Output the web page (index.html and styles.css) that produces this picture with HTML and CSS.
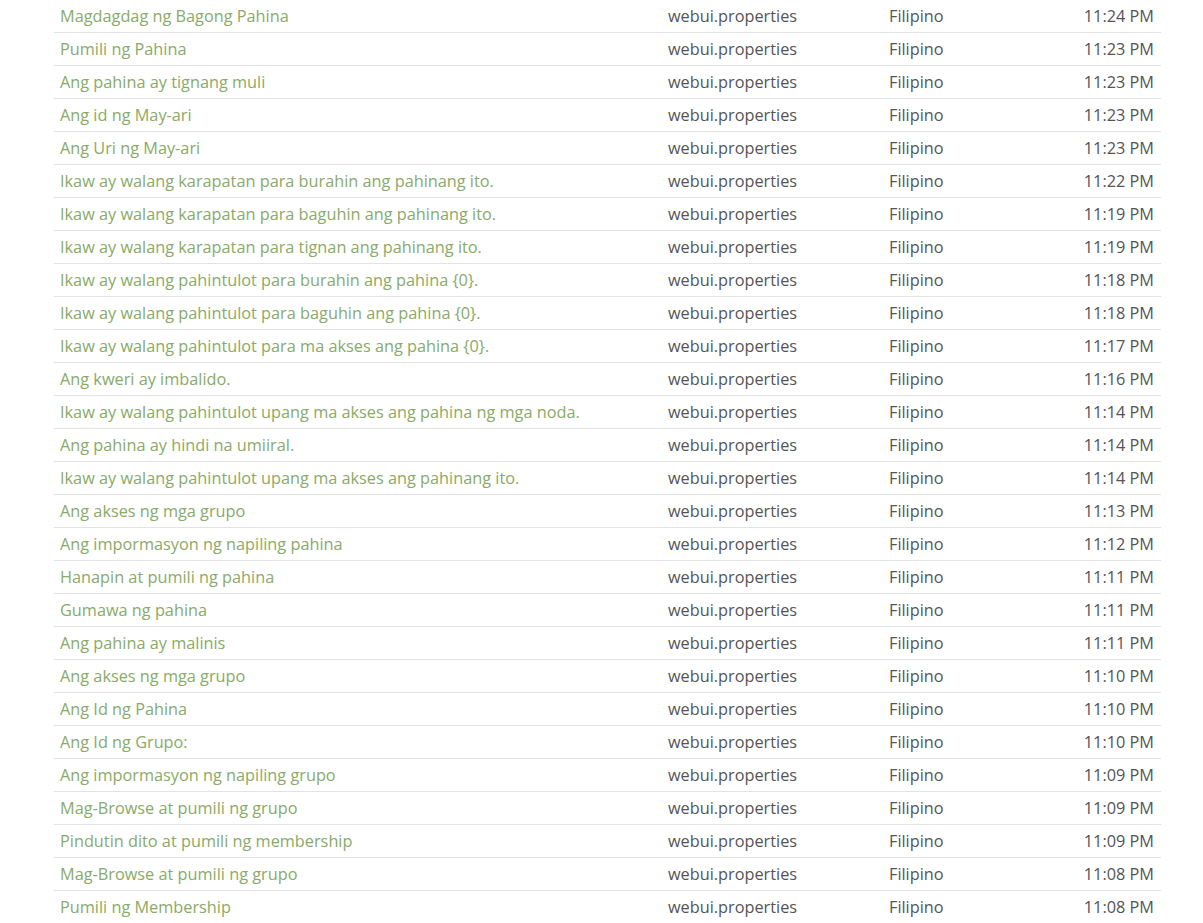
FILE: index.html
```html
<!DOCTYPE html>
<html>
<head>
<meta charset="utf-8">
<link rel="stylesheet" href="styles.css">
</head>
<body>
<div class="wrap">
<table class="list">
<colgroup><col class="c1"><col class="c2"><col class="c3"><col class="c4"></colgroup>
<tbody>
<tr><td><a href="#">Magdagdag ng Bagong Pahina</a></td><td>webui.properties</td><td>Filipino</td><td class="t">11:24 PM</td></tr>
<tr><td><a href="#">Pumili ng Pahina</a></td><td>webui.properties</td><td>Filipino</td><td class="t">11:23 PM</td></tr>
<tr><td><a href="#">Ang pahina ay tignang muli</a></td><td>webui.properties</td><td>Filipino</td><td class="t">11:23 PM</td></tr>
<tr><td><a href="#">Ang id ng May-ari</a></td><td>webui.properties</td><td>Filipino</td><td class="t">11:23 PM</td></tr>
<tr><td><a href="#">Ang Uri ng May-ari</a></td><td>webui.properties</td><td>Filipino</td><td class="t">11:23 PM</td></tr>
<tr><td><a href="#">Ikaw ay walang karapatan para burahin ang pahinang ito.</a></td><td>webui.properties</td><td>Filipino</td><td class="t">11:22 PM</td></tr>
<tr><td><a href="#">Ikaw ay walang karapatan para baguhin ang pahinang ito.</a></td><td>webui.properties</td><td>Filipino</td><td class="t">11:19 PM</td></tr>
<tr><td><a href="#">Ikaw ay walang karapatan para tignan ang pahinang ito.</a></td><td>webui.properties</td><td>Filipino</td><td class="t">11:19 PM</td></tr>
<tr><td><a href="#">Ikaw ay walang pahintulot para burahin ang pahina {0}.</a></td><td>webui.properties</td><td>Filipino</td><td class="t">11:18 PM</td></tr>
<tr><td><a href="#">Ikaw ay walang pahintulot para baguhin ang pahina {0}.</a></td><td>webui.properties</td><td>Filipino</td><td class="t">11:18 PM</td></tr>
<tr><td><a href="#">Ikaw ay walang pahintulot para ma akses ang pahina {0}.</a></td><td>webui.properties</td><td>Filipino</td><td class="t">11:17 PM</td></tr>
<tr><td><a href="#">Ang kweri ay imbalido.</a></td><td>webui.properties</td><td>Filipino</td><td class="t">11:16 PM</td></tr>
<tr><td><a href="#">Ikaw ay walang pahintulot upang ma akses ang pahina ng mga noda.</a></td><td>webui.properties</td><td>Filipino</td><td class="t">11:14 PM</td></tr>
<tr><td><a href="#">Ang pahina ay hindi na umiiral.</a></td><td>webui.properties</td><td>Filipino</td><td class="t">11:14 PM</td></tr>
<tr><td><a href="#">Ikaw ay walang pahintulot upang ma akses ang pahinang ito.</a></td><td>webui.properties</td><td>Filipino</td><td class="t">11:14 PM</td></tr>
<tr><td><a href="#">Ang akses ng mga grupo</a></td><td>webui.properties</td><td>Filipino</td><td class="t">11:13 PM</td></tr>
<tr><td><a href="#">Ang impormasyon ng napiling pahina</a></td><td>webui.properties</td><td>Filipino</td><td class="t">11:12 PM</td></tr>
<tr><td><a href="#">Hanapin at pumili ng pahina</a></td><td>webui.properties</td><td>Filipino</td><td class="t">11:11 PM</td></tr>
<tr><td><a href="#">Gumawa ng pahina</a></td><td>webui.properties</td><td>Filipino</td><td class="t">11:11 PM</td></tr>
<tr><td><a href="#">Ang pahina ay malinis</a></td><td>webui.properties</td><td>Filipino</td><td class="t">11:11 PM</td></tr>
<tr><td><a href="#">Ang akses ng mga grupo</a></td><td>webui.properties</td><td>Filipino</td><td class="t">11:10 PM</td></tr>
<tr><td><a href="#">Ang Id ng Pahina</a></td><td>webui.properties</td><td>Filipino</td><td class="t">11:10 PM</td></tr>
<tr><td><a href="#">Ang Id ng Grupo:</a></td><td>webui.properties</td><td>Filipino</td><td class="t">11:10 PM</td></tr>
<tr><td><a href="#">Ang impormasyon ng napiling grupo</a></td><td>webui.properties</td><td>Filipino</td><td class="t">11:09 PM</td></tr>
<tr><td><a href="#">Mag-Browse at pumili ng grupo</a></td><td>webui.properties</td><td>Filipino</td><td class="t">11:09 PM</td></tr>
<tr><td><a href="#">Pindutin dito at pumili ng membership</a></td><td>webui.properties</td><td>Filipino</td><td class="t">11:09 PM</td></tr>
<tr><td><a href="#">Mag-Browse at pumili ng grupo</a></td><td>webui.properties</td><td>Filipino</td><td class="t">11:08 PM</td></tr>
<tr><td><a href="#">Pumili ng Membership</a></td><td>webui.properties</td><td>Filipino</td><td class="t">11:08 PM</td></tr>
</tbody>
</table>
</div>
</body>
</html>
```

FILE: styles.css
```css
html, body {
  margin: 0;
  padding: 0;
  background: #fff;
  overflow: hidden;
}
body {
  font-family: "Open Sans", "Liberation Sans", sans-serif;
  font-size: 16.3px;
  color: #555;
}
.wrap {
  padding-left: 54px;
  width: 1107px;
}
.list {
  width: 1107px;
  border-collapse: collapse;
  table-layout: fixed;
}
.c1 { width: 608px; }
.c2 { width: 221px; }
.c3 { width: 157px; }
.c4 { width: 121px; }
.list td {
  padding: 5px 6px;
  height: 22px;
  line-height: 22px;
  border-bottom: 1px solid #e3e3e3;
  white-space: nowrap;
  overflow: hidden;
  vertical-align: middle;
}
.list td.t {
  text-align: right;
  padding-right: 7px;
}
.list a {
  color: #89aa68;
  text-decoration: none;
}
```
